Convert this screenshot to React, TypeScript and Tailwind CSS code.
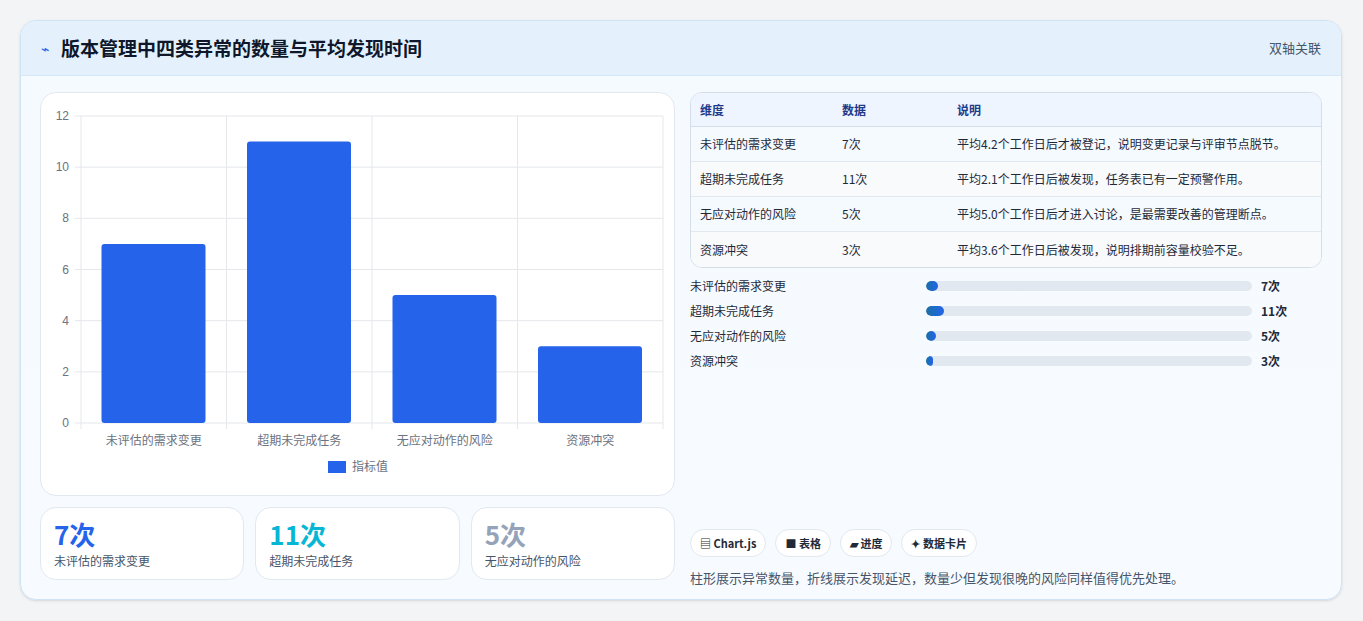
import React from "react";

const rows = [
  { n: "未评估的需求变更", v: 7, d: "平均4.2个工作日后才被登记，说明变更记录与评审节点脱节。" },
  { n: "超期未完成任务", v: 11, d: "平均2.1个工作日后被发现，任务表已有一定预警作用。" },
  { n: "无应对动作的风险", v: 5, d: "平均5.0个工作日后才进入讨论，是最需要改善的管理断点。" },
  { n: "资源冲突", v: 3, d: "平均3.6个工作日后被发现，说明排期前容量校验不足。" },
];

function Chart() {
  const W = 635, H = 404;
  const x0 = 40, x1 = 622, y0 = 330, yTop = 23;
  const unit = (y0 - yTop) / 12;
  const cw = (x1 - x0) / 4;
  return (
    <svg width={W} height={H} className="block">
      {[0, 2, 4, 6, 8, 10, 12].map((t) => {
        const y = y0 - t * unit;
        return (
          <g key={t}>
            <line x1={x0 - 6} x2={x1} y1={y} y2={y} stroke="#e5e7eb" />
            <text x={x0 - 12} y={y + 4} textAnchor="end" fontSize="12" fill="#6b7280" fontFamily="Liberation Sans, sans-serif">{t}</text>
          </g>
        );
      })}
      {[0, 1, 2, 3, 4].map((i) => (
        <line key={i} x1={x0 + i * cw} x2={x0 + i * cw} y1={yTop} y2={y0 + 6} stroke="#e5e7eb" />
      ))}
      {rows.map((r, i) => {
        const bx = x0 + i * cw + 20.5;
        const h = r.v * unit;
        return (
          <g key={i}>
            <rect x={bx} y={y0 - h} width={104} height={h} rx={3} fill="#2563eb" />
            <text x={x0 + i * cw + cw / 2} y={y0 + 22} textAnchor="middle" fontSize="12" fill="#6b7280" fontFamily="'Noto Sans CJK SC', sans-serif">{r.n}</text>
          </g>
        );
      })}
      <rect x={287} y={368} width={18} height={12} fill="#2563eb" />
      <text x={311} y={378} fontSize="12" fill="#6b7280" fontFamily="'Noto Sans CJK SC', sans-serif">指标值</text>
    </svg>
  );
}

export default function App() {
  return (
    <div className="w-[1363px] h-[621px] bg-[#f3f4f6] pt-5 px-5 text-[#1f2937]" style={{ fontFamily: "'Noto Sans CJK SC', sans-serif" }}>
      <div className="w-[1322px] h-[580px] rounded-2xl border border-[#cfe3f5] bg-gradient-to-b from-[#f5faff] to-[#f7fbff] overflow-hidden shadow-sm">
        <div className="h-[55px] bg-[#e4f1fd] border-b border-[#d6e8f8] flex items-center justify-between px-5">
          <div className="flex items-center gap-3">
            <span className="text-[#2563eb] text-sm">⌁</span>
            <span className="text-[19px] font-bold text-[#0f172a]">版本管理中四类异常的数量与平均发现时间</span>
          </div>
          <span className="text-[13px] text-[#475569]">双轴关联</span>
        </div>
        <div className="flex gap-[15px] px-[19px] pt-4">
          <div className="w-[635px] flex flex-col gap-[11px]">
            <div className="h-[404px] bg-white rounded-2xl border border-[#e2e8f0]"><Chart /></div>
            <div className="flex gap-[11px]">
              {[
                { v: "7次", n: "未评估的需求变更", c: "text-[#2563eb]" },
                { v: "11次", n: "超期未完成任务", c: "text-[#06b6d4]" },
                { v: "5次", n: "无应对动作的风险", c: "text-[#94a3b8]" },
              ].map((s, i) => (
                <div key={i} className="flex-1 h-[73px] bg-white rounded-2xl border border-[#e2e8f0] px-[13px] pt-[8px]">
                  <div className={`text-[26px] font-bold leading-[36px] ${s.c}`}>{s.v}</div>
                  <div className="text-[12px] text-[#475569]">{s.n}</div>
                </div>
              ))}
            </div>
          </div>
          <div className="flex-1 flex flex-col">
            <div className="rounded-xl border border-[#d4dde8] overflow-hidden bg-white text-[12px]">
              <div className="flex h-[34px] items-center bg-[#eef5ff] border-b border-[#d4dde8] text-[#1e3a8a] font-bold">
                <div className="w-[151px] pl-[9px]">维度</div>
                <div className="w-[115px]">数据</div>
                <div>说明</div>
              </div>
              {rows.map((r, i) => (
                <div key={i} className={`flex h-[35px] items-center text-[#1f2937] ${i < 3 ? "border-b border-[#e2e8f0]" : ""} ${i % 2 ? "bg-[#f8fafc]" : "bg-[#f5faff]"}`}>
                  <div className="w-[151px] pl-[9px]">{r.n}</div>
                  <div className="w-[115px]">{r.v}次</div>
                  <div>{r.d}</div>
                </div>
              ))}
            </div>
            <div className="mt-[8px] flex flex-col gap-[5px]">
              {rows.map((r, i) => (
                <div key={i} className="flex items-center h-[20px] text-[12px]">
                  <div className="w-[236px]">{r.n}</div>
                  <div className="w-[326px] h-[10px] rounded-full bg-[#e2e8f0] overflow-hidden">
                    <div className="h-full rounded-full bg-gradient-to-r from-[#1d6fa5] to-[#2563eb]" style={{ width: `${r.v * 0.4 + 1}%` }} />
                  </div>
                  <div className="ml-[9px] font-bold">{r.v}次</div>
                </div>
              ))}
            </div>
            <div className="mt-[158px] flex gap-[9px] text-[11px] font-bold text-[#1f2937]">
              {["▤ Chart.js", "■ 表格", "▰ 进度", "✦ 数据卡片"].map((c) => (
                <span key={c} className="h-[28px] px-[9px] flex items-center rounded-full border border-[#e2e8f0] bg-white">{c}</span>
              ))}
            </div>
            <div className="mt-[11px] text-[13px] text-[#475569]">柱形展示异常数量，折线展示发现延迟，数量少但发现很晚的风险同样值得优先处理。</div>
          </div>
        </div>
      </div>
    </div>
  );
}
